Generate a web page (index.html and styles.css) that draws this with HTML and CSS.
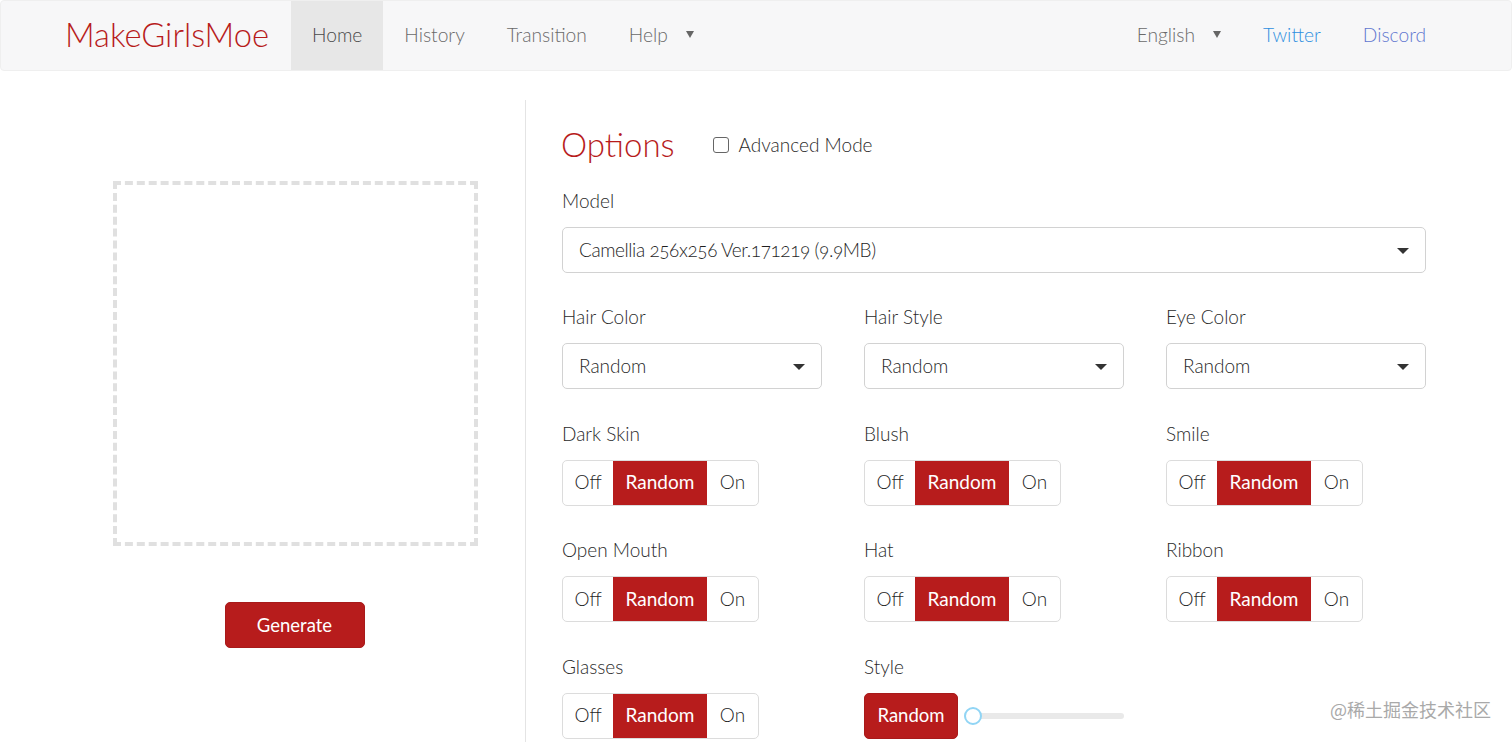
FILE: index.html
```html
<!DOCTYPE html>
<html>

<head>
    <meta charset="utf-8">
    <title>MakeGirlsMoe</title>
    <link rel="stylesheet" href="styles.css">
</head>

<body>
    <nav class="navbar">
        <a class="brand">MakeGirlsMoe</a>
        <a class="nav-item active">Home</a>
        <a class="nav-item">History</a>
        <a class="nav-item">Transition</a>
        <a class="nav-item">Help<span class="nav-caret"></span></a>
        <div class="nav-right">
            <a class="nav-item">English<span class="nav-caret"></span></a>
            <a class="nav-item twitter">Twitter</a>
            <a class="nav-item discord">Discord</a>
        </div>
    </nav>

    <div id="main">
        <div class="left">
            <div class="canvas"></div>
            <button class="btn generate">Generate</button>
        </div>

        <div class="right">
            <div class="options-head">
                <h2>Options</h2>
                <label class="check"><input type="checkbox">Advanced Mode</label>
            </div>

            <div class="field model">
                <div class="label">Model</div>
                <div class="select">Camellia 256x256 Ver.171219 (9.9MB)</div>
            </div>

            <div class="grid">
                <div class="field">
                    <div class="label">Hair Color</div>
                    <div class="select">Random</div>
                </div>
                <div class="field">
                    <div class="label">Hair Style</div>
                    <div class="select">Random</div>
                </div>
                <div class="field">
                    <div class="label">Eye Color</div>
                    <div class="select">Random</div>
                </div>

                <div class="field">
                    <div class="label">Dark Skin</div>
                    <div class="toggle"><span>Off</span><span class="on">Random</span><span>On</span></div>
                </div>
                <div class="field">
                    <div class="label">Blush</div>
                    <div class="toggle"><span>Off</span><span class="on">Random</span><span>On</span></div>
                </div>
                <div class="field">
                    <div class="label">Smile</div>
                    <div class="toggle"><span>Off</span><span class="on">Random</span><span>On</span></div>
                </div>

                <div class="field">
                    <div class="label">Open Mouth</div>
                    <div class="toggle"><span>Off</span><span class="on">Random</span><span>On</span></div>
                </div>
                <div class="field">
                    <div class="label">Hat</div>
                    <div class="toggle"><span>Off</span><span class="on">Random</span><span>On</span></div>
                </div>
                <div class="field">
                    <div class="label">Ribbon</div>
                    <div class="toggle"><span>Off</span><span class="on">Random</span><span>On</span></div>
                </div>

                <div class="field">
                    <div class="label">Glasses</div>
                    <div class="toggle"><span>Off</span><span class="on">Random</span><span>On</span></div>
                </div>
                <div class="field">
                    <div class="label">Style</div>
                    <div class="style-row">
                        <button class="btn random">Random</button>
                        <div class="slider"><div class="knob"></div></div>
                    </div>
                </div>
            </div>
        </div>
    </div>

    <div class="watermark">@稀土掘金技术社区</div>
</body>

</html>
```

FILE: styles.css
```css
* {
    margin: 0px;
    padding: 0px;
    box-sizing: border-box;
}

html,
body {
    height: 742px;
    overflow: hidden;
}

body {
    position: relative;
    font-family: "Lato", "Open Sans", sans-serif;
    font-size: 19px;
    font-variant-numeric: oldstyle-nums;
    color: #2a2a2a;
    background: #fff;
}

.navbar {
    display: flex;
    align-items: stretch;
    height: 71px;
    padding: 0 64px 0 66px;
    background: #f7f7f8;
    border: 1px solid #efefef;
    border-radius: 4px;
}

.brand {
    display: flex;
    align-items: center;
    width: 226px;
    margin-left: -2px;
    padding-bottom: 3px;
    font-size: 32.7px;
    font-weight: 300;
    color: #b71c1c;
}

.nav-item {
    display: flex;
    align-items: center;
    padding: 0 21px 3px;
    font-size: 19.2px;
    color: #6a6a6a;
    font-weight: 300;
}

.nav-item.active {
    background: #e7e7e7;
    color: #4a4a4a;
}

.nav-right {
    display: flex;
    margin-left: auto;
}

.twitter {
    color: #2f8fe0;
}

.discord {
    color: #6278d0;
}

.nav-caret {
    width: 0;
    height: 0;
    margin: 0 0 0 18px;
    border-left: 4px solid transparent;
    border-right: 4px solid transparent;
    border-top: 7px solid #666;
}

#main {
    display: flex;
    padding-top: 29px;
}

.left {
    display: flex;
    flex-direction: column;
    align-items: center;
    width: 526px;
    height: 650px;
    padding: 81px 0 0 66px;
    border-right: 1px solid #e4e4e4;
}

.canvas {
    width: 365px;
    height: 365px;
    border: 4px dashed #e0e0e0;
}

.btn {
    padding-bottom: 2px;
    font-family: inherit;
    font-size: 18.5px;
    color: #fff;
    background: #b71c1c;
    border: 1px solid #a81a1a;
    border-radius: 5px;
}

.generate {
    width: 140px;
    height: 46px;
    margin: 56px 0 0 -2px;
    padding-bottom: 0;
}

.right {
    width: 900px;
    padding-left: 36px;
}

.options-head {
    display: flex;
    align-items: center;
    gap: 38px;
    height: 45px;
    margin-top: 21px;
}

h2 {
    margin-left: -1px;
    font-size: 33px;
    font-weight: 300;
    color: #b71c1c;
}

.check {
    display: flex;
    align-items: center;
    gap: 10px;
    padding-top: 2px;
    font-weight: 300;
}

.check input {
    appearance: none;
    width: 16px;
    height: 16px;
    background: #fff;
    border: 1px solid #666;
    border-radius: 3px;
}

.model {
    margin-top: 22px;
    margin-bottom: 31px;
}

.model .select {
    letter-spacing: -0.42px;
}

.label {
    height: 26px;
    line-height: 26px;
    margin-bottom: 13px;
    font-weight: 300;
}

.select {
    position: relative;
    display: flex;
    align-items: center;
    height: 46px;
    padding: 0 0 2px 16px;
    font-weight: 300;
    color: #1f1f1f;
    background: #fff;
    border: 1px solid #d2d2d2;
    border-radius: 5px;
}

.select::after {
    content: "";
    position: absolute;
    right: 16px;
    top: 20px;
    border-left: 6px solid transparent;
    border-right: 6px solid transparent;
    border-top: 6px solid #333;
}

.grid {
    display: grid;
    grid-template-columns: repeat(3, 260px);
    column-gap: 42px;
    row-gap: 31.5px;
}

.toggle {
    display: inline-flex;
    height: 46px;
    border: 1px solid #dcdcdc;
    border-radius: 5px;
    overflow: hidden;
}

.toggle span {
    display: flex;
    align-items: center;
    justify-content: center;
    width: 51px;
    padding-bottom: 2px;
    font-weight: 300;
    color: #1f1f1f;
}

.toggle span:first-child {
    width: 50px;
}

.toggle .on {
    width: 94px;
    background: #b71c1c;
    color: #fff;
    font-weight: 400;
}

.style-row {
    display: flex;
    align-items: center;
}

.random {
    width: 94px;
    height: 46px;
}

.slider {
    position: relative;
    width: 160px;
    height: 6px;
    margin-left: 6px;
    background: #e9e9e9;
    border-radius: 3px;
}

.knob {
    position: absolute;
    left: 0;
    top: -6px;
    width: 18px;
    height: 18px;
    background: #fff;
    border: 2px solid #91d5f5;
    border-radius: 50%;
}

.watermark {
    position: absolute;
    right: 21px;
    top: 696px;
    font-family: "Noto Sans CJK SC", sans-serif;
    font-size: 18px;
    color: #a9a9a9;
}
```
